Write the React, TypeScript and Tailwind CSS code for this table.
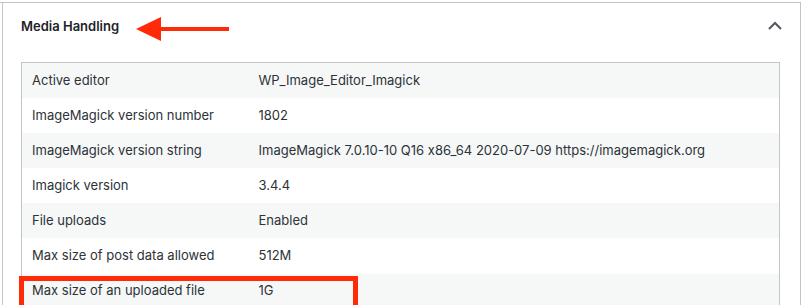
import React from "react";

const rows: [string, string][] = [
  ["Active editor", "WP_Image_Editor_Imagick"],
  ["ImageMagick version number", "1802"],
  ["ImageMagick version string", "ImageMagick 7.0.10-10 Q16 x86_64 2020-07-09 https://imagemagick.org"],
  ["Imagick version", "3.4.4"],
  ["File uploads", "Enabled"],
  ["Max size of post data allowed", "512M"],
  ["Max size of an uploaded file", "1G"],
  ["Max effective file size", "512 MB"],
];

function LeftArrow() {
  return (
    <svg width="93" height="24" viewBox="0 0 93 24" className="block">
      <polygon points="0,12 25,0 25,24" fill="#ff2a08" />
      <rect x="24" y="10" width="69" height="4" fill="#ff2a08" />
    </svg>
  );
}

function ChevronUp() {
  return (
    <svg width="16" height="10" viewBox="0 0 16 10" className="block">
      <path d="M2 8 L8 2 L14 8" fill="none" stroke="#50575e" strokeWidth="2" />
    </svg>
  );
}

export default function App() {
  return (
    <div
      className="w-[801px] h-[305px] overflow-hidden bg-white text-[#2c3338]"
      style={{ fontFamily: "Inter, 'Noto Sans', sans-serif", fontFeatureSettings: "'calt' 0" }}
    >
      <div className="mt-[2px] border-t border-[#c3c4c7]">
        <div className="ml-[2px] w-[799px] h-[400px] border-x border-[#c3c4c7] bg-white">
          <div className="flex items-start h-[59px] pl-[18px] pr-[17px]">
            <h3 className="mt-[15px] text-[13px] font-semibold text-[#1d2327] leading-[16px]">Media Handling</h3>
            <div className="mt-[14px] ml-[17px]">
              <LeftArrow />
            </div>
            <div className="mt-[18px] ml-auto">
              <ChevronUp />
            </div>
          </div>
          <div className="pl-[18px] pr-[20px]">
            <table className="w-full border border-[#c3c4c7] border-collapse text-[13px]">
              <tbody>
                {rows.map(([label, value], i) => (
                  <tr key={label} className={i % 2 === 0 ? "bg-[#f6f7f7]" : "bg-white"}>
                    <td className="relative h-[35.2px] w-[227px] pl-[10px] align-middle">
                      {i === 6 && (
                        <span className="absolute left-[-3px] top-[2px] w-[339px] h-[40px] border-[5px] border-[#ff2a08]" />
                      )}
                      <span className="relative">{label}</span>
                    </td>
                    <td className="h-[35.2px] pl-[10px] align-middle">
                      <span className="relative">{value}</span>
                    </td>
                  </tr>
                ))}
              </tbody>
            </table>
          </div>
        </div>
      </div>
    </div>
  );
}
